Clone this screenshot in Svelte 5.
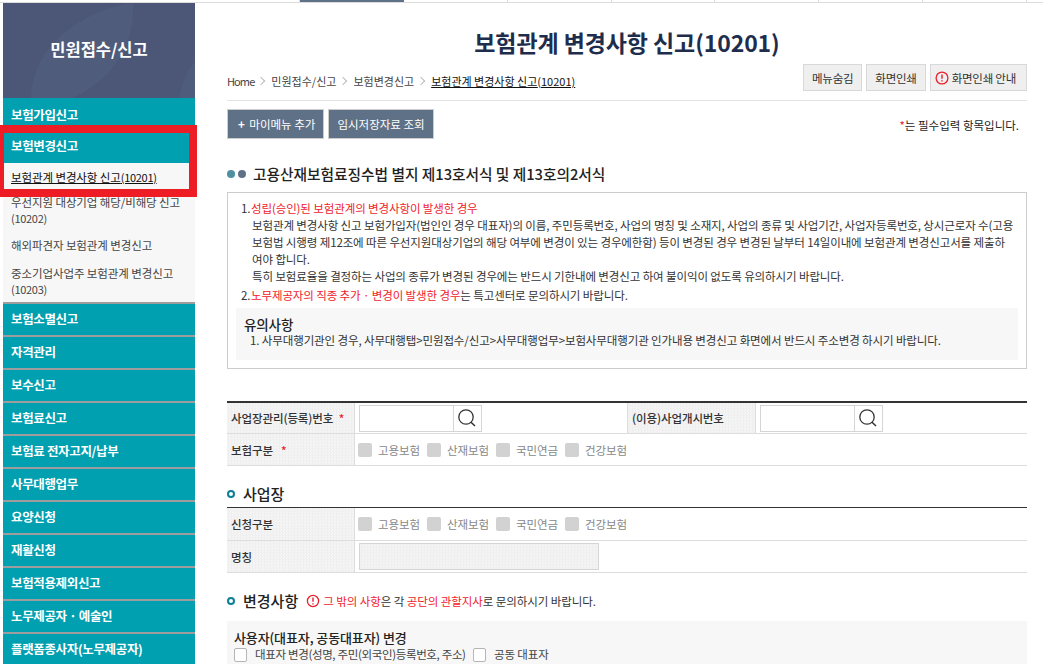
<script>
  const topTabs = [0, 1, 2, 3, 4, 5, 6, 7];
  const afterItems = ['보험소멸신고', '자격관리', '보수신고', '보험료신고', '보험료 전자고지/납부', '사무대행업무', '요양신청', '재활신청', '보험적용제외신고', '노무제공자 · 예술인', '플랫폼종사자(노무제공자)'];
  const kinds = ['고용보험', '산재보험', '국민연금', '건강보험'];
</script>

<div class="page">
  <div class="tabs">
    {#each topTabs as t}
      <span class="tab" class:on={t === 1}></span>
    {/each}
  </div>
  <div class="body">
    <aside class="side">
      <div class="side-head">
        <svg class="swoosh" viewBox="0 0 192 95" preserveAspectRatio="none" aria-hidden="true">
          <path d="M28 95C28 50 70 10 128 0h2C132 40 112 75 70 95Z" fill="#505c7b" />
          <path d="M176 95c4-20 10-30 16-36v36Z" fill="#505c7b" />
        </svg>
        <span>민원접수/신고</span>
      </div>
      <div class="m first">보험가입신고</div>
      <div class="m open">보험변경신고</div>
      <div class="subs">
        <div class="sub cur"><u>보험관계 변경사항 신고<small>(10201)</small></u></div>
        <div class="sub two">우선지원 대상기업 해당/비해당 신고<br /><small>(10202)</small></div>
        <div class="sub">해외파견자 보험관계 변경신고</div>
        <div class="sub two">중소기업사업주 보험관계 변경신고<br /><small>(10203)</small></div>
      </div>
      {#each afterItems as item}
        <div class="m">{item}</div>
      {/each}
      <div class="redbox"></div>
    </aside>

    <main class="main">
      <h1>보험관계 변경사항 신고(10201)</h1>
      <div class="crumbrow">
        <nav class="crumbs">
          <span class="home">Home</span><i></i><span>민원접수/신고</span><i></i><span>보험변경신고</span><i></i><u>보험관계 변경사항 신고<small>(10201)</small></u>
        </nav>
        <div class="tools">
          <button>메뉴숨김</button>
          <button>화면인쇄</button>
          <button class="guide">
            <svg width="14" height="14" viewBox="0 0 14 14" aria-hidden="true"><circle cx="7" cy="7" r="5.9" fill="none" stroke="#e8202c" stroke-width="1.3" /><path d="M7 3.4v4.4M7 9.2v1.4" stroke="#e8202c" stroke-width="1.4" /></svg>
            화면인쇄 안내
          </button>
        </div>
      </div>
      <div class="actions">
        <button class="dark"><b>+</b> 마이메뉴 추가</button>
        <button class="dark">임시저장자료 조회</button>
        <p class="req"><em>*</em>는 필수입력 항목입니다.</p>
      </div>

      <h2 class="lead"><span class="dot a"></span><span class="dot b"></span>고용산재보험료징수법 별지 제13호서식 및 제13호의2서식</h2>

      <section class="notice">
        <p><span class="n">1.</span><span class="red">성립(승인)된 보험관계의 변경사항이 발생한 경우</span></p>
        <p class="in">보험관계 변경사항 신고 보험가입자(법인인 경우 대표자)의 이름, 주민등록번호, 사업의 명칭 및 소재지, 사업의 종류 및 사업기간, 사업자등록번호, 상시근로자 수(고용</p>
        <p class="in">보험법 시행령 제12조에 따른 우선지원대상기업의 해당 여부에 변경이 있는 경우에한함) 등이 변경된 경우 변경된 날부터 14일이내에 보험관계 변경신고서를 제출하</p>
        <p class="in">여야 합니다.</p>
        <p class="in">특히 보험료율을 결정하는 사업의 종류가 변경된 경우에는 반드시 기한내에 변경신고 하여 불이익이 없도록 유의하시기 바랍니다.</p>
        <p class="gap"><span class="n">2.</span><span class="red">노무제공자의 직종 추가 · 변경이 발생한 경우</span>는 특고센터로 문의하시기 바랍니다.</p>
        <div class="caution">
          <h3>유의사항</h3>
          <p>1. 사무대행기관인 경우, 사무대행탭&gt;민원접수/신고&gt;사무대행업무&gt;보험사무대행기관 인가내용 변경신고 화면에서 반드시 주소변경 하시기 바랍니다.</p>
        </div>
      </section>

      <div class="tbl t1">
        <div class="row r1">
          <div class="lab">사업장관리(등록)번호 <em>*</em></div>
          <div class="val w272">
            <div class="search"><span class="field"></span><span class="glass">
              <svg width="22" height="22" viewBox="0 0 22 22" aria-hidden="true"><circle cx="10" cy="10" r="7.2" fill="none" stroke="#333" stroke-width="1.3" /><path d="M15 15.2l4 3.8" stroke="#333" stroke-width="1.5" /></svg>
            </span></div>
          </div>
          <div class="lab">(이용)사업개시번호</div>
          <div class="val">
            <div class="search"><span class="field"></span><span class="glass">
              <svg width="22" height="22" viewBox="0 0 22 22" aria-hidden="true"><circle cx="10" cy="10" r="7.2" fill="none" stroke="#333" stroke-width="1.3" /><path d="M15 15.2l4 3.8" stroke="#333" stroke-width="1.5" /></svg>
            </span></div>
          </div>
        </div>
        <div class="row">
          <div class="lab">보험구분 &nbsp;<em>*</em></div>
          <div class="val checks">
            {#each kinds as k}<span class="chk"><i></i>{k}</span>{/each}
          </div>
        </div>
      </div>

      <h2 class="sec s1"><span class="ring"></span>사업장</h2>
      <div class="tbl t2">
        <div class="row r2a">
          <div class="lab">신청구분</div>
          <div class="val checks">
            {#each kinds as k}<span class="chk"><i></i>{k}</span>{/each}
          </div>
        </div>
        <div class="row">
          <div class="lab">명칭</div>
          <div class="val"><div class="namebox"></div></div>
        </div>
      </div>

      <div class="sec s2">
        <h2><span class="ring"></span>변경사항</h2>
        <p class="hint">
          <svg width="14" height="14" viewBox="0 0 14 14" aria-hidden="true"><circle cx="7" cy="7" r="5.6" fill="none" stroke="#e8202c" stroke-width="1.3" /><path d="M7 3.6v4.2M7 9.2v1.3" stroke="#e8202c" stroke-width="1.4" /></svg>
          <span class="red">그 밖의 사항</span>은 각 <span class="red">공단의 관할지사</span>로 문의하시기 바랍니다.
        </p>
      </div>
      <div class="change">
        <h3>사용자(대표자, 공동대표자) 변경</h3>
        <div class="opts">
          <span class="opt o1"><i></i>대표자 변경(성명, 주민(외국인)등록번호, 주소)</span>
          <span class="opt"><i></i>공동 대표자</span>
        </div>
      </div>
    </main>
  </div>
</div>

<style>
  :global(body) { margin: 0; background: #fff; }
  .page { width: 1043px; height: 664px; overflow: hidden; font-family: "Noto Sans CJK KR", "Liberation Sans", sans-serif; font-size: 12px; color: #333; }
  p, h1, h2, h3 { margin: 0; }
  button { font-family: inherit; cursor: pointer; }
  i, em { font-style: normal; }
  em { color: #e8202c; }

  .tabs { height: 2px; border-bottom: 1px solid #ddd; padding-left: 196px; display: flex; }
  .tab { width: 103.9px; border-right: 1px solid #ddd; box-sizing: border-box; }
  .tab.on { background: #5f7186; border-right: 0; }

  .body { display: flex; height: 661px; }

  .side { width: 192px; margin-left: 3px; position: relative; flex: none; }
  .side-head { height: 95px; background: #4c5777; position: relative; display: flex; align-items: center; justify-content: center; color: #fff; font-size: 16.5px; font-weight: 700; overflow: hidden; }
  .side-head span { position: relative; top: -2px; }
  .swoosh { position: absolute; inset: 0; width: 100%; height: 100%; }
  .m { height: 31px; line-height: 30px; margin-bottom: 2px; padding-left: 8px; background: #00a0b0; color: #fff; font-weight: 700; font-size: 12.5px; letter-spacing: -0.35px; box-shadow: 0 1px 0 #9d9d9d, 0 2px 0 #9d9d9d; white-space: nowrap; }
  .m.first { height: 35px; line-height: 33px; margin: 0; box-shadow: none; }
  .m.open { height: 30px; line-height: 26px; margin: 0; box-shadow: none; }
  .subs { background: #f7f7f7; height: 139px; border-bottom: 2px solid #9d9d9d; padding-left: 8px; color: #444; font-size: 11.5px; line-height: 16px; letter-spacing: -0.1px; }
  .sub { padding-bottom: 10px; white-space: nowrap; }
  .sub small { font-size: 11px; letter-spacing: -0.3px; }
  .sub.cur { color: #111; height: 16px; padding: 6px 0 4px; }
  .sub:nth-child(2) { margin-top: 5px; }
  .sub:nth-child(3) { margin-top: 1px; }
  .sub:nth-child(4) { margin-top: 2px; }
  .redbox { position: absolute; left: -3px; top: 122px; width: 185px; height: 56px; border: solid #ee1c25; border-width: 8px 8px 8px 4px; pointer-events: none; }

  .main { width: 800px; margin-left: 32px; flex: none; position: relative; }
  h1 { font-size: 23px; font-weight: 700; color: #1f2d4d; text-align: center; line-height: 32px; margin-top: 23px; letter-spacing: -0.1px; }
  .crumbrow { display: flex; justify-content: space-between; align-items: flex-start; margin-top: 8px; height: 34px; border-bottom: 1px solid #e4e4e4; }
  .crumbs { display: flex; align-items: center; font-size: 11px; color: #444; height: 18px; margin-top: 6px; white-space: nowrap; }
  .home { letter-spacing: -0.9px; }
  .crumbs i { width: 5px; height: 5px; border: solid #bbb; border-width: 1px 1px 0 0; transform: rotate(45deg); margin: 0 7px 0 4px; }
  .crumbs u { color: #111; }
  .crumbs small { font-size: 11px; }
  .tools { display: flex; gap: 4px; margin-top: -2px; }
  .tools button { height: 27px; padding: 0 8px; border: 1px solid #d8d8d8; background: #efefef; color: #333; font-size: 11.5px; display: flex; align-items: center; gap: 3px; letter-spacing: -0.25px; white-space: nowrap; }
  .tools .guide { padding: 0 10px 0 4px; }
  .actions { display: flex; gap: 4px; margin-top: 8px; position: relative; height: 30px; }
  .dark { height: 30px; padding: 0 8px; background: #5f7186; border: 1px solid #ccc; color: #fff; font-size: 11.5px; white-space: nowrap; }
  .dark b { font-weight: 700; margin: 0 2px; }
  .req { position: absolute; right: 8px; top: 8px; font-size: 11.5px; color: #222; }

  .lead { font-size: 14.7px; font-weight: 500; color: #222; line-height: 20px; margin-top: 25px; display: flex; align-items: center; white-space: nowrap; }
  .dot { width: 8px; height: 8px; border-radius: 50%; margin-right: 3px; }
  .dot.a { background: #4f8f9f; }
  .dot.b { background: #5f7186; margin-right: 7px; }

  .notice { margin-top: 8px; height: 177px; box-sizing: border-box; border: 1px solid #ccc; padding: 7px 8px 0; font-size: 11.5px; line-height: 17px; color: #333; letter-spacing: -0.12px; white-space: nowrap; }
  .notice > p { padding-left: 5px; }
  .notice .in { padding-left: 16px; }
  .notice .gap { margin-top: 2px; }
  .n { display: inline-block; width: 10px; }
  .red { color: #f0222c; }
  .caution { margin-top: 4px; height: 52px; background: #f7f7f7; padding: 8px 8px 0; box-sizing: border-box; }
  .caution h3 { font-size: 13.5px; font-weight: 500; line-height: 17px; color: #222; }
  .caution p { padding-left: 6px; line-height: 15px; }

  .tbl { border-top: 2px solid #333; }
  .t1 { margin-top: 32px; }
  .t2 { margin-top: 2px; border-top-width: 1px; }
  .row { display: flex; height: 31px; border-bottom: 1px solid #ddd; }
  .r1 { height: 30px; }
  .r2a { height: 32px; }
  .lab { width: 128px; flex: none; box-sizing: border-box; padding-left: 4px; background: repeating-conic-gradient(#efefef 0 25%, #f5f5f5 0 50%) 0 0 / 3px 3px; border-right: 1px solid #ddd; display: flex; align-items: center; gap: 3px; font-size: 11.5px; font-weight: 500; color: #333; letter-spacing: -0.1px; white-space: pre; }
  .val { flex: 1; padding-left: 4px; display: flex; align-items: center; min-width: 0; }
  .val.w272 { flex: none; width: 268px; border-right: 1px solid #ddd; }
  .search { display: flex; width: 123px; height: 27px; box-sizing: border-box; border: 1px solid #d5d5d5; }
  .field { flex: 1; }
  .glass { width: 27px; border-left: 1px solid #d5d5d5; display: flex; align-items: center; justify-content: center; }
  .glass svg { margin-right: 2px; }
  .checks { padding-left: 3px; color: #888; font-size: 11.5px; }
  .chk { display: flex; align-items: center; width: 69px; white-space: nowrap; letter-spacing: -0.1px; }
  .chk i { width: 14px; height: 14px; background: #d2d2d2; border-radius: 2px; margin-right: 6px; flex: none; }
  .namebox { width: 240px; height: 27px; box-sizing: border-box; border: 1px solid #d5d5d5; background: repeating-conic-gradient(#efefef 0 25%, #f4f4f4 0 50%) 0 0 / 3px 3px; }

  .sec { display: flex; align-items: center; }
  h2.sec, .sec h2 { font-size: 15px; font-weight: 500; color: #222; line-height: 22px; display: flex; align-items: center; }
  .s1 { margin-top: 17px; }
  .ring { width: 4px; height: 4px; border: 2px solid #0b7f97; border-radius: 50%; margin-right: 8px; background: #fff; flex: none; }
  .s2 { margin-top: 17px; height: 22px; }
  .hint { display: flex; align-items: center; font-size: 11.5px; color: #333; margin-left: 8px; white-space: pre; letter-spacing: -0.08px; }
  .hint svg { margin-right: 3px; }
  .change { margin-top: 9px; height: 60px; background: #f7f7f7; padding: 8px 7px 0; }
  .change h3 { font-size: 13px; font-weight: 500; color: #222; line-height: 18px; letter-spacing: -0.1px; }
  .opts { display: flex; font-size: 11.5px; line-height: 15px; color: #444; letter-spacing: -0.15px; }
  .opt { display: flex; align-items: center; white-space: nowrap; }
  .opt i { width: 11px; height: 12px; background: #fff; border: 1px solid #b5b5b5; border-radius: 2px; margin-right: 8px; flex: none; }
  .o1 { width: 239px; letter-spacing: -0.35px; }
</style>
